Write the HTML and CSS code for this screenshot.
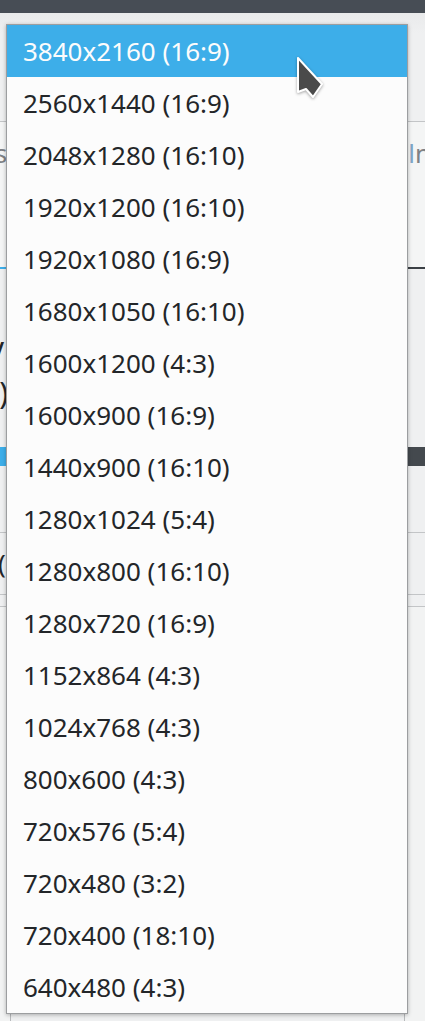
FILE: index.html
```html
<!DOCTYPE html>
<html>
<head>
<meta charset="utf-8">
<link rel="stylesheet" href="styles.css">
</head>
<body>
<div class="window">
  <div class="titlebar"></div>
  <div class="content">
    <div class="area-top"></div>
    <div class="sep"></div>
    <div class="tabs">
      <span class="tab-left">Res</span>
      <span class="tab-right"><span class="tab-l">l</span>n</span>
    </div>
    <div class="tabline"><div class="tabline-active"></div><div class="tabline-rest"></div></div>
    <div class="section">
      <div class="big-text">V</div>
      <div class="big-text second">0)</div>
    </div>
    <div class="slider"><div class="slider-fill"></div><div class="slider-rest"></div></div>
    <div class="section2"></div>
    <div class="sep"></div>
    <div class="row-small"><span class="small-glyph">(</span></div>
    <div class="sep"></div>
    <div class="gap10"></div>
    <div class="sep"></div>
    <div class="lower">
      <div class="box"></div>
    </div>
  </div>
</div>

<div class="popup">
  <div class="item active">3840x2160 (16:9)</div>
  <div class="item">2560x1440 (16:9)</div>
  <div class="item">2048x1280 (16:10)</div>
  <div class="item">1920x1200 (16:10)</div>
  <div class="item">1920x1080 (16:9)</div>
  <div class="item">1680x1050 (16:10)</div>
  <div class="item">1600x1200 (4:3)</div>
  <div class="item">1600x900 (16:9)</div>
  <div class="item">1440x900 (16:10)</div>
  <div class="item">1280x1024 (5:4)</div>
  <div class="item">1280x800 (16:10)</div>
  <div class="item">1280x720 (16:9)</div>
  <div class="item">1152x864 (4:3)</div>
  <div class="item">1024x768 (4:3)</div>
  <div class="item">800x600 (4:3)</div>
  <div class="item">720x576 (5:4)</div>
  <div class="item">720x480 (3:2)</div>
  <div class="item">720x400 (18:10)</div>
  <div class="item">640x480 (4:3)</div>
</div>

<svg class="cursor" width="30" height="46" viewBox="-3 -3 30 46">
  <path d="M0 0 L0 34 L8 31 L15 39 L24 26 L23 25 Z" fill="#4a4a4a" stroke="#ffffff" stroke-width="2" stroke-linejoin="round"/>
</svg>
</body>
</html>
```
FILE: styles.css
```css
html, body {
  margin: 0;
  padding: 0;
}
body {
  width: 425px;
  height: 1021px;
  overflow: hidden;
  background: #eff0f1;
  font-family: "Noto Sans", "DejaVu Sans", sans-serif;
  position: relative;
}
.window {
  display: flex;
  flex-direction: column;
  height: 1021px;
}
.titlebar {
  height: 13px;
  background: #474d55;
  flex: none;
}
.content {
  flex: 1;
  display: flex;
  flex-direction: column;
  background: #eff0f1;
}
.area-top {
  height: 108px;
  background: linear-gradient(#e9eaeb, #eff0f1 20px);
}
.sep {
  height: 1px;
  background: #c3c5c7;
  flex: none;
}
.tabs {
  height: 145px;
  display: flex;
  justify-content: space-between;
  align-items: flex-start;
  padding-top: 13px;
  box-sizing: border-box;
  font-size: 26px;
  color: #7f8285;
  line-height: 36px;
  background: #f4f5f5;
}
.tab-left {
  margin-left: -36px;
}
.tab-right {
  margin-right: -6px;
}
.tab-l {
  color: #7fa6c6;
}
.tabline {
  height: 2px;
  display: flex;
}
.tabline-active {
  width: 200px;
  background: #3daee9;
}
.tabline-rest {
  flex: 1;
  background: #3b4045;
}
.section {
  height: 178px;
  padding-top: 64px;
  box-sizing: border-box;
  font-size: 30px;
  color: #232629;
}
.big-text {
  line-height: 40px;
  margin-left: -14px;
}
.big-text.second {
  margin-left: -18px;
}
.slider {
  height: 19px;
  display: flex;
  padding: 0;
}
.slider-fill {
  width: 200px;
  background: #3daee9;
}
.slider-rest {
  flex: 1;
  background: #44494e;
}
.section2 {
  height: 66px;
  background: #eff0f1;
}
.row-small {
  height: 61px;
  font-size: 26px;
  color: #232629;
  line-height: 61px;
}
.small-glyph {
  margin-left: -2px;
}
.gap10 {
  height: 11px;
}
.lower {
  flex: 1;
  display: flex;
  flex-direction: column;
  justify-content: flex-end;
  background: #f2f3f3;
}
.box {
  margin: 0 20px 0 10px;
  height: 30px;
  border: 1px solid #b8babc;
  border-bottom: none;
  background: #eff0f1;
}

.popup {
  position: absolute;
  left: 6px;
  top: 24px;
  width: 400px;
  border: 1px solid #9c9ea0;
  background: #fcfcfc;
  box-shadow: 0 1px 4px rgba(0, 0, 0, 0.28);
  display: flex;
  flex-direction: column;
}
.item {
  height: 52px;
  line-height: 52px;
  padding-left: 16px;
  font-size: 26px;
  color: #232629;
  white-space: nowrap;
}
.item.active {
  background: #3daee9;
  color: #fcfcfc;
}
.cursor {
  position: absolute;
  left: 295px;
  top: 55px;
  filter: drop-shadow(0 1px 1.5px rgba(0,0,0,0.35));
}
```
